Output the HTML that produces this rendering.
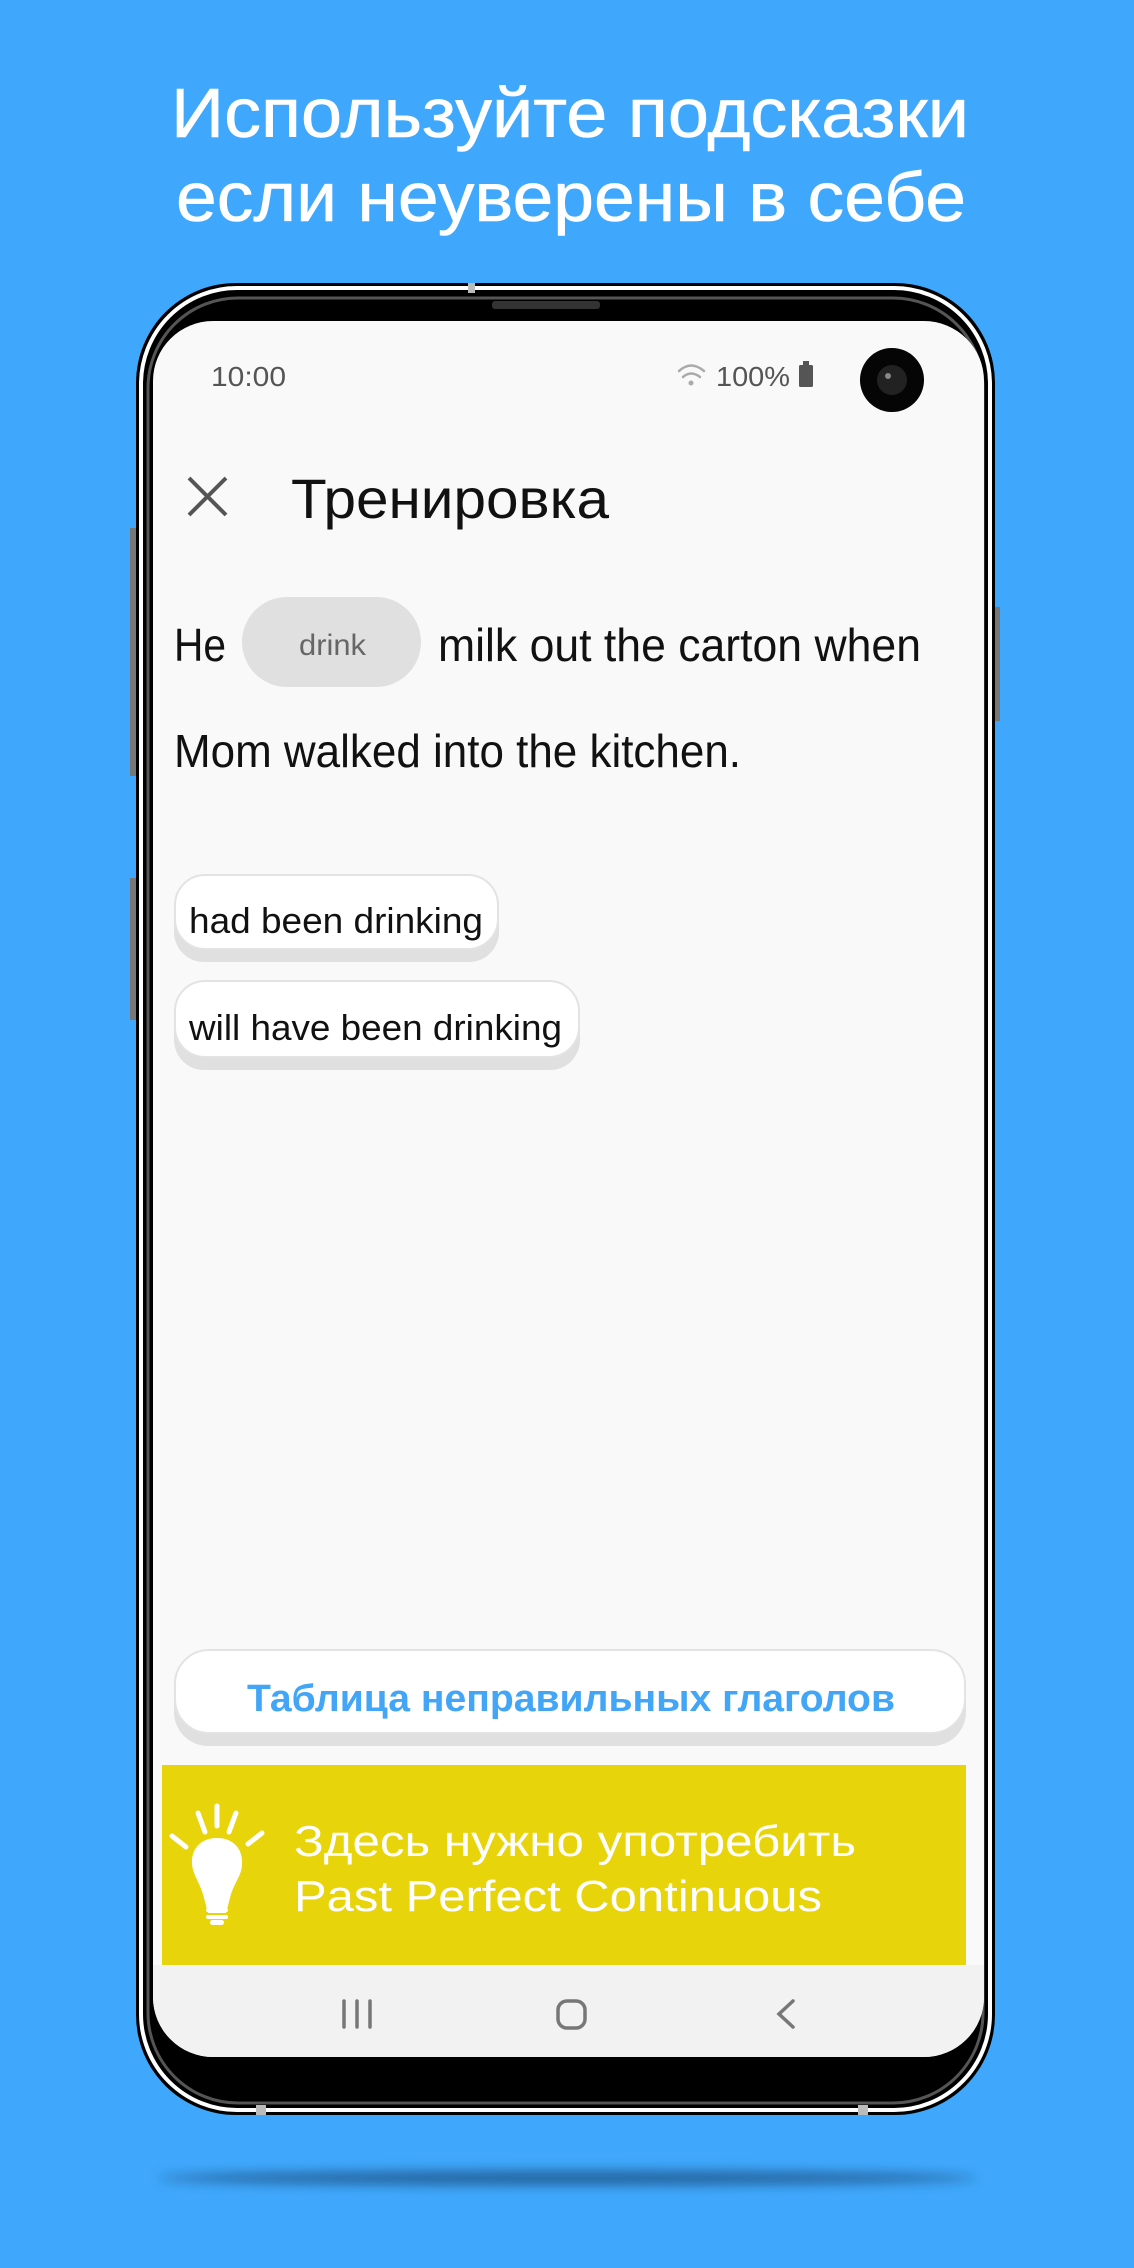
<!DOCTYPE html>
<html><head><meta charset="utf-8"><style>
html,body{margin:0;padding:0;background:#40a8fc;}
svg{display:block;}
text{font-family:"Liberation Sans",sans-serif;}
</style></head><body>
<svg width="1134" height="2268" viewBox="0 0 1134 2268" xmlns="http://www.w3.org/2000/svg">
<defs>
<filter id="bl" x="-20%" y="-200%" width="140%" height="500%"><feGaussianBlur stdDeviation="6"/></filter>
</defs>
<rect width="1134" height="2268" fill="#40a8fc"/>
<text x="171" y="137" font-size="70" fill="#fff" stroke="#fff" stroke-width="0.6" textLength="798" lengthAdjust="spacingAndGlyphs">Используйте подсказки</text>
<text x="176" y="221" font-size="70" fill="#fff" stroke="#fff" stroke-width="0.6" textLength="790" lengthAdjust="spacingAndGlyphs">если неуверены в себе</text>
<ellipse cx="567" cy="2178" rx="410" ry="7" fill="#1d4f80" opacity="0.8" filter="url(#bl)"/>
<rect x="130" y="528" width="6" height="248" fill="#777"/>
<rect x="130" y="878" width="6" height="142" fill="#777"/>
<rect x="995" y="607" width="5" height="114" fill="#777"/>
<rect x="136" y="283" width="859" height="1832" rx="100" fill="#000"/>
<rect x="141" y="288" width="849" height="1822" rx="96" fill="none" stroke="#fff" stroke-width="4"/>
<rect x="148" y="298" width="835" height="1805" rx="90" fill="none" stroke="#555" stroke-width="3"/>
<rect x="468" y="283" width="7" height="10" fill="#bbb"/>
<rect x="256" y="2105" width="10" height="10" fill="#bbb"/>
<rect x="858" y="2105" width="10" height="10" fill="#bbb"/>
<rect x="492" y="301" width="108" height="8" rx="3" fill="#333"/>
<rect x="153" y="321" width="831" height="1736" rx="60" fill="#f9f9f9"/>
<text x="211" y="386" font-size="28" fill="#555" textLength="75" lengthAdjust="spacingAndGlyphs">10:00</text>
<g fill="none" stroke="#aaa" stroke-width="2.5" stroke-linecap="round">
<path d="M679 371 Q691 360 704 371"/><path d="M683 377 Q691 370 700 377"/></g>
<circle cx="691" cy="383" r="2.5" fill="#aaa"/>
<text x="716" y="386" font-size="28" fill="#555" textLength="74" lengthAdjust="spacingAndGlyphs">100%</text>
<rect x="799" y="365" width="14" height="22" rx="1.5" fill="#555"/><rect x="803" y="361" width="6" height="5" fill="#555"/>
<circle cx="892" cy="380" r="32" fill="#050505"/>
<circle cx="892" cy="380" r="15" fill="#222"/>
<circle cx="888" cy="376" r="3" fill="#888"/>
<path d="M189 478 L226 515 M226 478 L189 515" stroke="#555" stroke-width="4"/>
<text x="291" y="518" font-size="56" fill="#111" textLength="318" lengthAdjust="spacingAndGlyphs">Тренировка</text>
<text x="174" y="661" font-size="46" fill="#111" textLength="52" lengthAdjust="spacingAndGlyphs">He</text>
<rect x="242" y="597" width="179" height="90" rx="45" fill="#e0e0e0"/>
<text x="299" y="655" font-size="30" fill="#666" textLength="67" lengthAdjust="spacingAndGlyphs">drink</text>
<text x="438" y="661" font-size="46" fill="#111" textLength="483" lengthAdjust="spacingAndGlyphs">milk out the carton when</text>
<text x="174" y="767" font-size="46" fill="#111" textLength="567" lengthAdjust="spacingAndGlyphs">Mom walked into the kitchen.</text>
<rect x="174" y="876" width="325" height="86" rx="30" fill="#e0e0e0"/>
<rect x="175" y="875" width="323" height="74" rx="30" fill="#fff" stroke="#e3e3e3" stroke-width="2"/>
<text x="189" y="933" font-size="36" fill="#111" textLength="294" lengthAdjust="spacingAndGlyphs">had been drinking</text>
<rect x="174" y="982" width="406" height="88" rx="30" fill="#e0e0e0"/>
<rect x="175" y="981" width="404" height="76" rx="30" fill="#fff" stroke="#e3e3e3" stroke-width="2"/>
<text x="189" y="1040" font-size="36" fill="#111" textLength="373" lengthAdjust="spacingAndGlyphs">will have been drinking</text>
<rect x="174" y="1651" width="792" height="95" rx="34" fill="#e0e0e0"/>
<rect x="175" y="1650" width="790" height="83" rx="34" fill="#fff" stroke="#e3e3e3" stroke-width="2"/>
<text x="247" y="1711" font-size="38" font-weight="bold" fill="#42a5f5" textLength="648" lengthAdjust="spacingAndGlyphs">Таблица неправильных глаголов</text>
<rect x="162" y="1765" width="804" height="200" fill="#e8d40a"/>
<g fill="#fff">
<path d="M217 1838 C198 1838 191 1852 192 1864 C193 1876 201 1884 204 1898 L208 1913 L226 1913 L230 1898 C233 1884 242 1876 242 1864 C243 1852 236 1838 217 1838 Z"/>
<rect x="206" y="1901" width="22" height="4" rx="2"/><rect x="206" y="1908" width="22" height="4" rx="2"/><rect x="206" y="1915" width="22" height="4" rx="2"/>
<rect x="210" y="1920" width="14" height="5" rx="2.5"/>
</g>
<g stroke="#fff" stroke-width="5" stroke-linecap="round">
<path d="M217 1806 L217 1826"/><path d="M198 1813 L205 1832"/><path d="M236 1813 L229 1832"/>
<path d="M172 1836 L186 1847"/><path d="M262 1833 L248 1844"/>
</g>
<text x="294" y="1856" font-size="44" fill="#fff" textLength="562" lengthAdjust="spacingAndGlyphs">Здесь нужно употребить</text>
<text x="294" y="1911" font-size="44" fill="#fff" textLength="528" lengthAdjust="spacingAndGlyphs">Past Perfect Continuous</text>
<path d="M153 1965 H984 V1997 A60 60 0 0 1 924 2057 H213 A60 60 0 0 1 153 1997 Z" fill="#f2f2f2"/>
<g stroke="#777" stroke-width="3.5" fill="none" stroke-linecap="round">
<path d="M344 2001 V2027 M357 2001 V2027 M370 2001 V2027"/>
<rect x="558" y="2001" width="27" height="27" rx="9"/>
<path d="M793 2001 L779 2014 L793 2027"/>
</g>
</svg>
</body></html>
